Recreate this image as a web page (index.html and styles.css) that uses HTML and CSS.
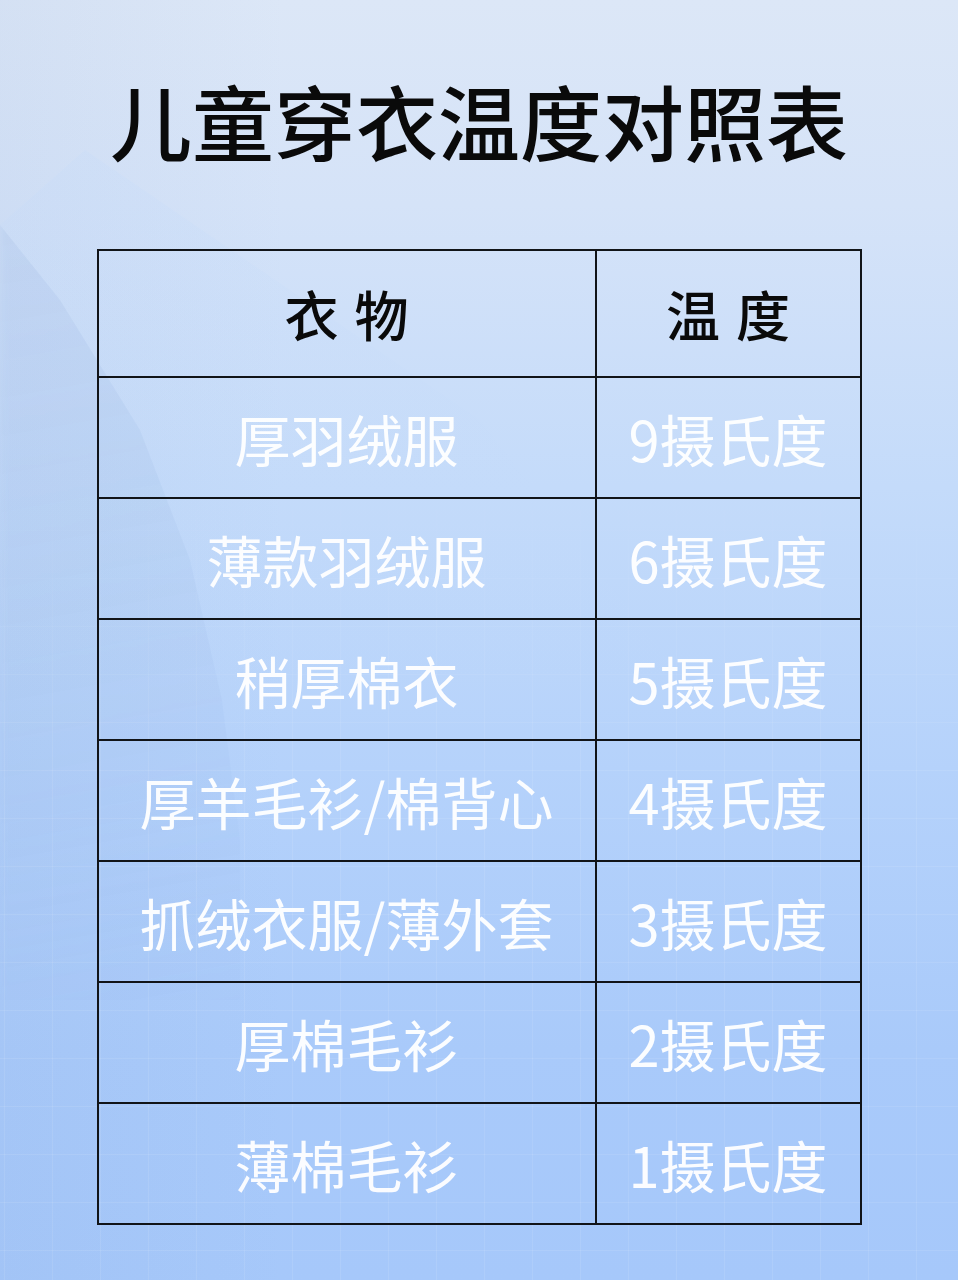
FILE: index.html
```html
<!DOCTYPE html>
<html lang="zh-CN">
<head>
<meta charset="utf-8">
<title>儿童穿衣温度对照表</title>
<link rel="stylesheet" href="styles.css">
</head>
<body>
<div class="page">
  <div class="deco deco-peak"></div>
  <div class="deco deco-slope"></div>
  <div class="deco deco-grid"></div>
  <h1 class="title">儿童穿衣温度对照表</h1>
  <div class="chart">
    <div class="cell head">衣 物</div>
    <div class="cell head last-col">温 度</div>

    <div class="cell">厚羽绒服</div>
    <div class="cell last-col">9摄氏度</div>

    <div class="cell">薄款羽绒服</div>
    <div class="cell last-col">6摄氏度</div>

    <div class="cell">稍厚棉衣</div>
    <div class="cell last-col">5摄氏度</div>

    <div class="cell">厚羊毛衫/棉背心</div>
    <div class="cell last-col">4摄氏度</div>

    <div class="cell">抓绒衣服/薄外套</div>
    <div class="cell last-col">3摄氏度</div>

    <div class="cell">厚棉毛衫</div>
    <div class="cell last-col">2摄氏度</div>

    <div class="cell last-row">薄棉毛衫</div>
    <div class="cell last-col last-row">1摄氏度</div>
  </div>
</div>
</body>
</html>
```

FILE: styles.css
```css
html, body {
  margin: 0;
  padding: 0;
}

body {
  width: 958px;
  height: 1280px;
  overflow: hidden;
  font-family: "Noto Sans CJK SC", "Noto Sans", sans-serif;
}

.page {
  position: relative;
  width: 958px;
  height: 1280px;
  overflow: hidden;
  background:
    linear-gradient(90deg, rgba(120, 150, 200, 0.08) 0%, rgba(120, 150, 200, 0) 30%),
    linear-gradient(180deg, #dce7f7 0%, #d5e3f8 16%, #c4dbfa 38%, #b5d2fb 60%, #a9cafa 82%, #a6c8fa 100%);
  display: flex;
  flex-direction: column;
  align-items: center;
}

.deco {
  position: absolute;
  pointer-events: none;
}

.deco-peak {
  left: 0;
  top: 0;
  width: 958px;
  height: 1280px;
  background: linear-gradient(180deg, rgba(195, 218, 250, 0.6) 0%, rgba(185, 212, 250, 0) 55%);
  clip-path: polygon(85px 150px, 0 225px, 0 700px, 700px 700px, 480px 420px);
  opacity: 0.5;
}

.deco-slope {
  left: 0;
  top: 0;
  width: 958px;
  height: 1280px;
  background: linear-gradient(170deg, rgba(130, 160, 210, 0.16) 0%, rgba(140, 175, 230, 0.08) 55%, rgba(140, 175, 230, 0) 80%);
  clip-path: polygon(0 225px, 60px 300px, 140px 430px, 190px 560px, 222px 700px, 240px 840px, 240px 1000px, 0 1000px);
  filter: blur(4px);
}

.deco-grid {
  left: 0;
  top: 0;
  width: 958px;
  height: 1280px;
  background-image:
    repeating-linear-gradient(90deg, rgba(255, 255, 255, 0.09) 0 1px, transparent 1px 48px),
    repeating-linear-gradient(180deg, rgba(255, 255, 255, 0.09) 0 1px, transparent 1px 48px);
  background-position: 4px 2px;
  -webkit-mask-image: linear-gradient(180deg, transparent 0%, transparent 35%, #000 60%, #000 100%);
  mask-image: linear-gradient(180deg, transparent 0%, transparent 35%, #000 60%, #000 100%);
}

.title {
  position: relative;
  margin: 79px 0 0 0;
  font-size: 82px;
  line-height: 82px;
  font-weight: 500;
  color: #0a0a0a;
  letter-spacing: 0;
  white-space: nowrap;
}

.chart {
  position: relative;
  margin-top: 88px;
  width: 765px;
  box-sizing: border-box;
  border: 2px solid #111418;
  display: grid;
  grid-template-columns: 498px 263px;
  grid-template-rows: 127px repeat(6, 121px) 119px;
}

.cell {
  box-sizing: border-box;
  border-right: 2px solid #111418;
  border-bottom: 2px solid #111418;
  display: flex;
  align-items: center;
  justify-content: center;
  font-size: 56px;
  line-height: 1;
  font-weight: 400;
  color: rgba(255, 255, 255, 0.95);
  white-space: nowrap;
}

.cell.last-col {
  border-right: none;
}

.cell.last-row {
  border-bottom: none;
}

.cell.head {
  font-size: 54px;
  font-weight: 500;
  color: #0a0a0a;
  word-spacing: 4px;
}
```
